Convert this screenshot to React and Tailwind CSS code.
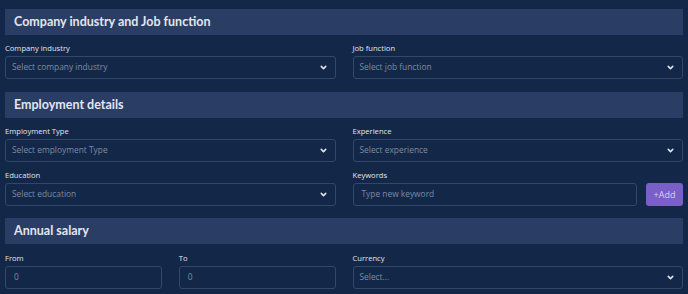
import React from "react";

const Chevron = () => (
  <svg width="9" height="9" viewBox="0 0 24 24" fill="none" stroke="#e5e7eb" strokeWidth="4" strokeLinecap="round" strokeLinejoin="round">
    <path d="M6 9l6 6 6-6" />
  </svg>
);

const Header = ({ children }) => (
  <div className="h-[26px] bg-[#2a3e65] flex items-center pl-[9px] text-[12.5px] font-bold text-[#e2e6ee]" style={{ fontFamily: "Lato, sans-serif" }}>
    {children}
  </div>
);

const Label = ({ children }) => (
  <div className="text-[7.6px] text-[#e2e6ee] h-[15px] flex items-center">{children}</div>
);

const Select = ({ placeholder }) => (
  <div className="h-[23px] border border-[#33476a] rounded-[3px] flex items-center justify-between pl-[6px] pr-[7px] text-[8.4px] text-[#7f8aa0]">
    <span>{placeholder}</span>
    <Chevron />
  </div>
);

const Input = ({ placeholder, className = "" }) => (
  <div className={"h-[23px] border border-[#33476a] rounded-[3px] flex items-center pl-[8px] text-[8.4px] text-[#7f8aa0] " + className}>
    {placeholder}
  </div>
);

export default function App() {
  return (
    <div className="w-[688px] h-[294px] bg-[#132848] px-[5px] pt-[9px] overflow-hidden" style={{ fontFamily: "'Open Sans', sans-serif" }}>
      <Header>Company industry and Job function</Header>
      <div className="grid grid-cols-2 gap-x-[17px] mt-[6px]">
        <div>
          <Label>Company industry</Label>
          <Select placeholder="Select company industry" />
        </div>
        <div>
          <Label>Job function</Label>
          <Select placeholder="Select job function" />
        </div>
      </div>
      <div className="mt-[13px]">
        <Header>Employment details</Header>
      </div>
      <div className="grid grid-cols-2 gap-x-[17px] gap-y-[6px] mt-[6px]">
        <div>
          <Label>Employment Type</Label>
          <Select placeholder="Select employment Type" />
        </div>
        <div>
          <Label>Experience</Label>
          <Select placeholder="Select experience" />
        </div>
        <div>
          <Label>Education</Label>
          <Select placeholder="Select education" />
        </div>
        <div>
          <Label>Keywords</Label>
          <div className="flex gap-[9px]">
            <Input placeholder="Type new keyword" className="flex-1" />
            <button className="h-[23px] w-[37px] bg-[#7a5fc8] rounded-[3px] text-[9px] text-[#d7d0f0] flex items-center justify-center">+Add</button>
          </div>
        </div>
      </div>
      <div className="mt-[12px]">
        <Header>Annual salary</Header>
      </div>
      <div className="grid grid-cols-2 gap-x-[17px] mt-[7px]">
        <div className="grid grid-cols-2 gap-x-[17px]">
          <div>
            <Label>From</Label>
            <Input placeholder="0" />
          </div>
          <div>
            <Label>To</Label>
            <Input placeholder="0" />
          </div>
        </div>
        <div>
          <Label>Currency</Label>
          <Select placeholder="Select..." />
        </div>
      </div>
    </div>
  );
}
